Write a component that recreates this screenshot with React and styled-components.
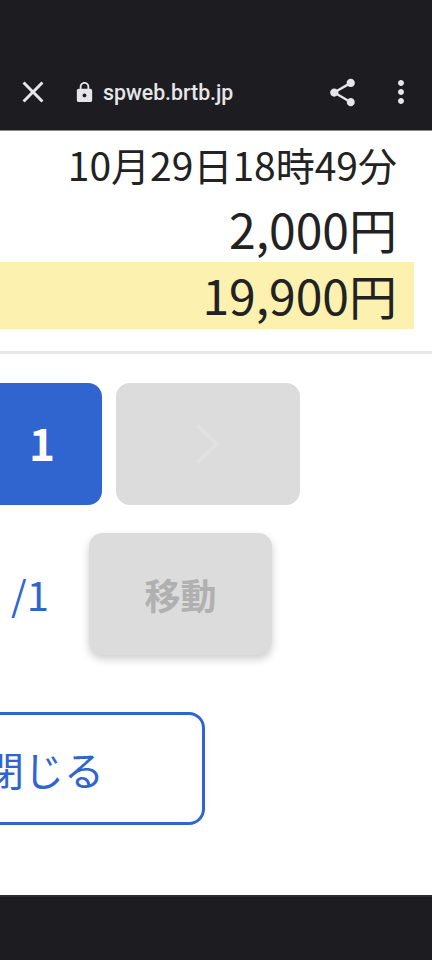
import React from "react";
import styled, { createGlobalStyle } from "styled-components";
import { MdClose, MdLock, MdShare, MdMoreVert } from "react-icons/md";

const Global = createGlobalStyle`
  html, body {
    margin: 0;
    padding: 0;
    background: #fff;
  }
  * {
    box-sizing: border-box;
  }
`;

const Screen = styled.div`
  width: 432px;
  height: 960px;
  display: flex;
  flex-direction: column;
  overflow: hidden;
  font-family: "Noto Sans CJK JP", "Noto Sans", sans-serif;
  color: #222;
`;

const Toolbar = styled.header`
  height: 131px;
  flex: none;
  padding-top: 54px;
  background: #1c1c21;
  border-bottom: 1px solid #8a8a8c;
  color: #e6e6e8;
  display: flex;
  align-items: center;
`;

const IconSlot = styled.div`
  flex: none;
  width: ${(p) => p.$w}px;
  margin-left: ${(p) => p.$ml || 0}px;
  margin-right: ${(p) => p.$mr || 0}px;
  display: flex;
  align-items: center;
  justify-content: center;
`;

const Url = styled.span`
  flex: 1;
  font-family: Roboto, sans-serif;
  font-weight: 500;
  font-size: 21.3px;
  margin-left: 7px;
`;

const Body = styled.main`
  flex: 1;
  display: flex;
  flex-direction: column;
  background: #fff;
`;

const DateLine = styled.div`
  height: 70px;
  padding-right: 35px;
  font-size: 39px;
  line-height: 66px;
  text-align: right;
  white-space: nowrap;
`;

const Amount = styled.div`
  height: 61px;
  padding-right: 35px;
  font-size: 48px;
  line-height: 55px;
  text-align: right;
`;

const TotalBand = styled.div`
  width: 414px;
  height: 67px;
  padding-right: 17px;
  background: #fdf1b0;
  font-size: 48px;
  line-height: 65px;
  text-align: right;
`;

const Divider = styled.hr`
  margin: 22px 0 0;
  border: none;
  height: 3px;
  background: #e8e8e8;
`;

const Pager = styled.div`
  display: flex;
  gap: 14px;
  margin: 29px 0 0 -20px;
`;

const PageButton = styled.div`
  width: ${(p) => (p.$active ? 122 : 184)}px;
  height: 122px;
  padding: ${(p) => (p.$active ? "0 0 4px 2px" : "0")};
  border-radius: 14px;
  display: flex;
  align-items: center;
  justify-content: center;
  background: ${(p) => (p.$active ? "#3065d0" : "#dcdcdc")};
  color: #fff;
  font-size: 44px;
  font-weight: 700;
`;

const JumpRow = styled.div`
  display: flex;
  align-items: center;
  margin-top: 28px;
`;

const PageTotal = styled.span`
  width: 89px;
  padding-left: 11px;
  color: #3065d0;
  font-size: 40px;
`;

const MoveButton = styled.div`
  width: 183px;
  height: 122px;
  border-radius: 14px;
  background: #dcdcdc;
  box-shadow: 0 4px 8px rgba(0, 0, 0, 0.2);
  color: #b0b0b0;
  font-size: 36px;
  font-weight: 700;
  display: flex;
  align-items: center;
  justify-content: center;
`;

const CloseButton = styled.div`
  width: 322px;
  height: 113px;
  margin: 57px 0 0 -117px;
  border: 3px solid #3065d0;
  border-radius: 16px;
  color: #3065d0;
  font-size: 40px;
  display: flex;
  align-items: center;
  justify-content: center;
`;

const BottomBar = styled.footer`
  height: 65px;
  flex: none;
  background: #1c1c21;
  border-top: 2px solid #2c2c30;
`;

const App = () => {
  return (
    <Screen>
      <Global />
      <Toolbar>
        <IconSlot $w={36} $ml={15}>
          <MdClose size={36} />
        </IconSlot>
        <IconSlot $w={24} $ml={21}>
          <MdLock size={23} />
        </IconSlot>
        <Url>spweb.brtb.jp</Url>
        <IconSlot $w={33} $mr={4}>
          <MdShare size={33} />
        </IconSlot>
        <IconSlot $w={36} $ml={20} $mr={13}>
          <MdMoreVert size={36} />
        </IconSlot>
      </Toolbar>
      <Body>
        <DateLine>10月29日18時49分</DateLine>
        <Amount>2,000円</Amount>
        <TotalBand>19,900円</TotalBand>
        <Divider />
        <Pager>
          <PageButton $active>1</PageButton>
          <PageButton>
            <svg width="28" height="42" viewBox="0 0 28 42" fill="none" stroke="#e1e1e1" strokeWidth="4">
              <path d="M3 2l20 19L3 40" />
            </svg>
          </PageButton>
        </Pager>
        <JumpRow>
          <PageTotal>/1</PageTotal>
          <MoveButton>移動</MoveButton>
        </JumpRow>
        <CloseButton>閉じる</CloseButton>
      </Body>
      <BottomBar />
    </Screen>
  );
};

export default App;
